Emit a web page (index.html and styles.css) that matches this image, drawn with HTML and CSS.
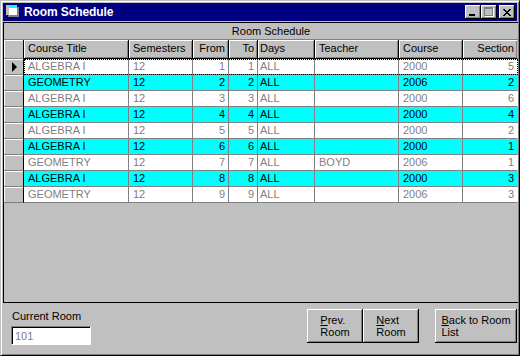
FILE: index.html
```html
<!DOCTYPE html>
<html lang="en">
<head>
    <meta charset="UTF-8">
    <title>Room Schedule</title>
    <link rel="stylesheet" href="styles.css">
</head>
<body>
    <div class="window">
        <div class="titlebar">
            <svg class="app-icon" width="16" height="16" viewBox="0 0 16 16">
                <rect x="3" y="3" width="11" height="10" fill="#000"/>
                <rect x="1" y="1" width="11" height="10" fill="#fff"/>
                <rect x="1" y="1" width="11" height="3" fill="#00ffff"/>
                <rect x="1" y="1" width="3" height="10" fill="#c0c0c0"/>
                <rect x="4" y="4" width="8" height="7" fill="#fff"/>
                <rect x="12" y="3" width="2" height="10" fill="#808080"/>
                <rect x="3" y="11" width="11" height="2" fill="#808080"/>
            </svg>
            <span class="title">Room Schedule</span>
            <div class="caption-buttons">
                <button class="cap-btn min"><span class="bar"></span></button>
                <button class="cap-btn max"><span class="box"></span></button>
                <button class="cap-btn close">
                    <svg width="8" height="7" viewBox="0 0 8 7">
                        <path d="M0 0h2v1h1v1h2v-1h1v-1h2v1h-1v1h-1v1h-1v1h1v1h1v1h1v1h-2v-1h-1v-1h-2v1h-1v1h-2v-1h1v-1h1v-1h1v-1h-1v-1h-1v-1h-1z" fill="#000"/>
                    </svg>
                </button>
            </div>
        </div>

        <div class="grid">
            <div class="grid-caption">Room Schedule</div>
            <div class="grid-head">
                <div class="selector"></div>
                <div class="hcell c-title">Course Title</div>
                <div class="hcell c-sem">Semesters</div>
                <div class="hcell c-from num">From</div>
                <div class="hcell c-to num">To</div>
                <div class="hcell c-days">Days</div>
                <div class="hcell c-teacher">Teacher</div>
                <div class="hcell c-course">Course</div>
                <div class="hcell c-section num">Section</div>
            </div>

            <div class="grid-row">
                <div class="selector current"><span class="pointer"></span></div>
                <div class="cells focus">
                    <div class="cell c-title">ALGEBRA I</div>
                    <div class="cell c-sem">12</div>
                    <div class="cell c-from num">1</div>
                    <div class="cell c-to num">1</div>
                    <div class="cell c-days">ALL</div>
                    <div class="cell c-teacher"></div>
                    <div class="cell c-course">2000</div>
                    <div class="cell c-section num">5</div>
                </div>
            </div>
            <div class="grid-row hl">
                <div class="selector"></div>
                <div class="cells">
                    <div class="cell c-title">GEOMETRY</div>
                    <div class="cell c-sem">12</div>
                    <div class="cell c-from num">2</div>
                    <div class="cell c-to num">2</div>
                    <div class="cell c-days">ALL</div>
                    <div class="cell c-teacher"></div>
                    <div class="cell c-course">2006</div>
                    <div class="cell c-section num">2</div>
                </div>
            </div>
            <div class="grid-row">
                <div class="selector"></div>
                <div class="cells">
                    <div class="cell c-title">ALGEBRA I</div>
                    <div class="cell c-sem">12</div>
                    <div class="cell c-from num">3</div>
                    <div class="cell c-to num">3</div>
                    <div class="cell c-days">ALL</div>
                    <div class="cell c-teacher"></div>
                    <div class="cell c-course">2000</div>
                    <div class="cell c-section num">6</div>
                </div>
            </div>
            <div class="grid-row hl">
                <div class="selector"></div>
                <div class="cells">
                    <div class="cell c-title">ALGEBRA I</div>
                    <div class="cell c-sem">12</div>
                    <div class="cell c-from num">4</div>
                    <div class="cell c-to num">4</div>
                    <div class="cell c-days">ALL</div>
                    <div class="cell c-teacher"></div>
                    <div class="cell c-course">2000</div>
                    <div class="cell c-section num">4</div>
                </div>
            </div>
            <div class="grid-row">
                <div class="selector"></div>
                <div class="cells">
                    <div class="cell c-title">ALGEBRA I</div>
                    <div class="cell c-sem">12</div>
                    <div class="cell c-from num">5</div>
                    <div class="cell c-to num">5</div>
                    <div class="cell c-days">ALL</div>
                    <div class="cell c-teacher"></div>
                    <div class="cell c-course">2000</div>
                    <div class="cell c-section num">2</div>
                </div>
            </div>
            <div class="grid-row hl">
                <div class="selector"></div>
                <div class="cells">
                    <div class="cell c-title">ALGEBRA I</div>
                    <div class="cell c-sem">12</div>
                    <div class="cell c-from num">6</div>
                    <div class="cell c-to num">6</div>
                    <div class="cell c-days">ALL</div>
                    <div class="cell c-teacher"></div>
                    <div class="cell c-course">2000</div>
                    <div class="cell c-section num">1</div>
                </div>
            </div>
            <div class="grid-row">
                <div class="selector"></div>
                <div class="cells">
                    <div class="cell c-title">GEOMETRY</div>
                    <div class="cell c-sem">12</div>
                    <div class="cell c-from num">7</div>
                    <div class="cell c-to num">7</div>
                    <div class="cell c-days">ALL</div>
                    <div class="cell c-teacher">BOYD</div>
                    <div class="cell c-course">2006</div>
                    <div class="cell c-section num">1</div>
                </div>
            </div>
            <div class="grid-row hl">
                <div class="selector"></div>
                <div class="cells">
                    <div class="cell c-title">ALGEBRA I</div>
                    <div class="cell c-sem">12</div>
                    <div class="cell c-from num">8</div>
                    <div class="cell c-to num">8</div>
                    <div class="cell c-days">ALL</div>
                    <div class="cell c-teacher"></div>
                    <div class="cell c-course">2000</div>
                    <div class="cell c-section num">3</div>
                </div>
            </div>
            <div class="grid-row">
                <div class="selector"></div>
                <div class="cells">
                    <div class="cell c-title">GEOMETRY</div>
                    <div class="cell c-sem">12</div>
                    <div class="cell c-from num">9</div>
                    <div class="cell c-to num">9</div>
                    <div class="cell c-days">ALL</div>
                    <div class="cell c-teacher"></div>
                    <div class="cell c-course">2006</div>
                    <div class="cell c-section num">3</div>
                </div>
            </div>
        </div>

        <div class="footer">
            <div class="room-field">
                <label for="currentRoom">Current Room</label>
                <input type="text" id="currentRoom" value="101" readonly>
            </div>
            <div class="nav-buttons">
                <button class="btn btn-small"><span><u>P</u>rev.<br>Room</span></button>
                <button class="btn btn-small"><span><u>N</u>ext<br>Room</span></button>
                <button class="btn btn-wide"><span><u>B</u>ack to Room<br>List</span></button>
            </div>
        </div>
    </div>
</body>
</html>
```

FILE: styles.css
```css
:root {
    --face: #c0c0c0;
    --shadow: #808080;
    --light: #ffffff;
    --dark: #000000;
    --navy: #000080;
    --cyan: #00ffff;
}

* {
    box-sizing: border-box;
}

body {
    margin: 0;
    padding: 0;
    background-color: var(--face);
    font-family: "Liberation Sans", Arial, sans-serif;
    font-size: 11px;
    color: #000;
}

.window {
    width: 520px;
    height: 356px;
    background-color: var(--face);
    border-top: 1px solid var(--face);
    border-left: 1px solid var(--face);
    border-right: 1px solid var(--dark);
    border-bottom: 1px solid var(--dark);
    box-shadow: inset 1px 1px 0 var(--light), inset -1px -1px 0 var(--shadow);
    padding: 2px 2px 2px 2px;
    display: flex;
    flex-direction: column;
}

/* Title bar */
.titlebar {
    height: 18px;
    margin-right: 0;
    background-color: var(--navy);
    color: #fff;
    display: flex;
    align-items: center;
    padding-left: 2px;
}

.app-icon {
    flex: none;
    margin-right: 3px;
}

.title {
    font-weight: bold;
    font-size: 12px;
    letter-spacing: -0.1px;
}

.caption-buttons {
    margin-left: auto;
    display: flex;
    margin-right: 2px;
}

.cap-btn {
    width: 16px;
    height: 14px;
    padding: 0;
    border: none;
    background-color: var(--face);
    box-shadow: inset -1px -1px 0 var(--dark), inset 1px 1px 0 var(--light), inset -2px -2px 0 var(--shadow);
    display: flex;
    align-items: center;
    justify-content: center;
    position: relative;
}

.cap-btn.close {
    margin-left: 2px;
}

.cap-btn .bar {
    position: absolute;
    left: 4px;
    top: 9px;
    width: 6px;
    height: 2px;
    background-color: #000;
}

.cap-btn .box {
    position: absolute;
    left: 3px;
    top: 2px;
    width: 9px;
    height: 9px;
    border: 1px solid var(--shadow);
    border-top-width: 2px;
    box-shadow: 1px 1px 0 var(--light);
}

/* Data grid */
.grid {
    margin-top: 1px;
    width: 515px;
    height: 281px;
    flex: none;
    border-top: 1px solid var(--dark);
    border-left: 1px solid var(--dark);
    border-bottom: 1px solid var(--dark);
    background-color: var(--face);
}

.grid-caption {
    height: 17px;
    line-height: 16px;
    text-align: center;
    padding-left: 20px;
    border-bottom: 1px solid var(--shadow);
}

.grid-head {
    display: flex;
    height: 19px;
}

.grid-head .selector {
    height: 19px;
}

.hcell {
    height: 19px;
    line-height: 17px;
    padding: 0 3px 0 4px;
    background-color: var(--face);
    border-right: 1px solid var(--dark);
    border-bottom: 1px solid var(--dark);
    box-shadow: inset 1px 1px 0 var(--light), inset -1px -1px 0 var(--shadow);
    white-space: nowrap;
    overflow: hidden;
}

.selector {
    width: 20px;
    flex: none;
    height: 16px;
    background-color: var(--face);
    border-right: 1px solid var(--dark);
    border-bottom: 1px solid var(--shadow);
    box-shadow: inset 1px 1px 0 var(--light);
    display: flex;
    align-items: center;
    justify-content: center;
}

.pointer {
    width: 0;
    height: 0;
    border-top: 5px solid transparent;
    border-bottom: 5px solid transparent;
    border-left: 5px solid #000;
    margin-left: 1px;
}

.grid-row {
    display: flex;
    height: 16px;
}

.cells {
    display: flex;
    height: 16px;
    background-color: #fff;
    color: var(--shadow);
}

.grid-row.hl .cells {
    background-color: var(--cyan);
    color: #000;
}

.cells.focus {
    outline: 1px dotted #000;
    outline-offset: -1px;
}

.cell {
    height: 16px;
    line-height: 15px;
    padding: 0 3px 0 4px;
    border-right: 1px solid var(--shadow);
    border-bottom: 1px solid var(--shadow);
    white-space: nowrap;
    overflow: hidden;
}

.num {
    text-align: right;
}

.c-title { width: 105px; }
.c-sem { width: 64px; }
.c-from { width: 36px; }
.c-to { width: 29px; }
.c-days { width: 57px; padding-left: 2px; }
.c-teacher { width: 84px; }
.c-course { width: 64px; }
.c-section { width: 55px; border-right-color: transparent; }

/* Footer controls */
.footer {
    flex: 1;
    display: flex;
    justify-content: space-between;
    align-items: flex-start;
}

.room-field {
    display: flex;
    flex-direction: column;
    padding: 7px 0 0 8px;
}

.room-field label {
    padding-left: 1px;
    margin-bottom: 3px;
    line-height: 13px;
}

.room-field input {
    width: 80px;
    height: 19px;
    font-family: inherit;
    font-size: 11px;
    color: var(--shadow);
    background-color: #fff;
    border-top: 1px solid var(--shadow);
    border-left: 1px solid var(--shadow);
    border-right: 1px solid var(--light);
    border-bottom: 1px solid var(--light);
    box-shadow: inset 1px 1px 0 var(--dark);
    padding: 0 0 0 3px;
    outline: none;
}

.nav-buttons {
    display: flex;
    padding-top: 6px;
}

.btn {
    height: 34px;
    padding: 0;
    font-family: inherit;
    font-size: 11px;
    line-height: 12px;
    color: #000;
    background-color: var(--face);
    border: none;
    box-shadow: inset -1px -1px 0 var(--dark), inset 1px 1px 0 var(--light), inset -2px -2px 0 var(--shadow);
    display: flex;
    align-items: center;
    justify-content: center;
    text-align: left;
}

.btn-small {
    width: 56px;
}

.btn-wide {
    width: 82px;
    margin-left: 16px;
}
```
